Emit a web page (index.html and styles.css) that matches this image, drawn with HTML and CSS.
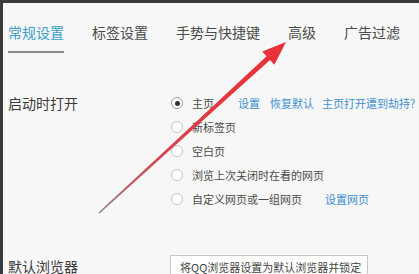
FILE: index.html
```html
<!DOCTYPE html>
<html lang="zh-CN">
<head>
<meta charset="utf-8">
<link rel="stylesheet" href="styles.css">
</head>
<body>
<div class="frame">
  <nav class="tabs">
    <span class="tab active">常规设置</span>
    <span class="tab">标签设置</span>
    <span class="tab">手势与快捷键</span>
    <span class="tab">高级</span>
    <span class="tab">广告过滤</span>
  </nav>
  <section class="section startup">
    <div class="label">启动时打开</div>
    <div class="options">
      <div class="row"><span class="radio checked"></span><span>主页</span><a class="link l1">设置</a><a class="link l2">恢复默认</a><a class="link l3">主页打开遭到劫持?</a></div>
      <div class="row"><span class="radio"></span><span>新标签页</span></div>
      <div class="row"><span class="radio"></span><span>空白页</span></div>
      <div class="row"><span class="radio"></span><span>浏览上次关闭时在看的网页</span></div>
      <div class="row"><span class="radio"></span><span>自定义网页或一组网页</span><a class="link l4">设置网页</a></div>
    </div>
  </section>
  <section class="section browser">
    <div class="label">默认浏览器</div>
    <div class="options"><button class="btn">将QQ浏览器设置为默认浏览器并锁定</button></div>
  </section>
  <svg class="arrow" width="419" height="274" viewBox="0 0 419 274">
    <defs>
      <linearGradient id="g" x1="99" y1="213" x2="286" y2="42" gradientUnits="userSpaceOnUse">
        <stop offset="0" stop-color="#8f7f86"/>
        <stop offset="0.2" stop-color="#c9505e"/>
        <stop offset="0.6" stop-color="#e4373f"/>
        <stop offset="1" stop-color="#ea3038"/>
      </linearGradient>
    </defs>
    <polygon fill="url(#g)" points="99.5,213.55 270,60.05 274.4,64.8 286,42 262.2,51.6 266.6,56.35 98.5,212.45"/>
  </svg>
</div>
</body>
</html>
```
FILE: styles.css
```css
* { box-sizing: border-box; }
html, body { margin: 0; padding: 0; }
body {
  width: 419px;
  height: 274px;
  overflow: hidden;
  background: #f7f7f7;
  font-family: "Noto Sans CJK SC", "Noto Sans", sans-serif;
  color: #444;
}
.frame {
  position: relative;
  height: 274px;
  border-top: 3px solid #3a3a3a;
  border-left: 3px solid #3a3a3a;
  padding-left: 5px;
}
.tabs {
  display: flex;
  gap: 28px;
  padding-top: 19px;
  font-size: 14px;
  line-height: 20px;
}
.tab {
  color: #4a4a4a;
  padding-bottom: 9px;
  border-bottom: 2px solid transparent;
}
.tab.active {
  color: #3a9ccc;
  border-bottom-color: #8a8a8a;
}
.section {
  display: grid;
  grid-template-columns: 163px 1fr;
}
.startup { margin-top: 38px; }
.browser { margin-top: 44px; }
.label {
  font-size: 14px;
  line-height: 24px;
  color: #3a3a3a;
}
.browser .label { line-height: 22px; }
.options { font-size: 11px; }
.row {
  display: flex;
  align-items: center;
  height: 24px;
  line-height: 24px;
  color: #4a4a4a;
}
.radio {
  width: 12px;
  height: 12px;
  border-radius: 50%;
  border: 1px solid #c4c4c4;
  background: #fff;
  margin-right: 9px;
  position: relative;
  flex: none;
}
.radio.checked { border-color: #999; }
.radio.checked::after {
  content: "";
  position: absolute;
  left: 2.5px;
  top: 2.5px;
  width: 5px;
  height: 5px;
  border-radius: 50%;
  background: #333;
}
.link { color: #3d8fcf; cursor: pointer; }
.l1 { margin-left: 24px; }
.l2 { margin-left: 10px; }
.l3 { margin-left: 8px; }
.l4 { margin-left: 23px; }
.btn {
  font-family: inherit;
  font-size: 11px;
  color: #444;
  background: #fff;
  border: 1px solid #c8c8c8;
  height: 24px;
  width: 198px;
  padding: 0 0 0 9px;
  text-align: left;
  margin-left: -1px;
}
.arrow {
  position: absolute;
  left: -3px;
  top: -3px;
  pointer-events: none;
}
```
